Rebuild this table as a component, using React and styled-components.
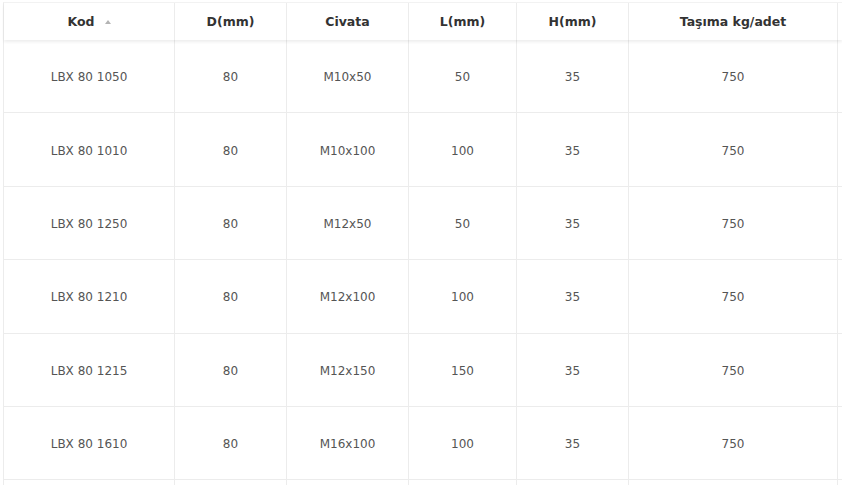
import React from "react";
import styled, { createGlobalStyle } from "styled-components";

const GlobalStyle = createGlobalStyle`
  html, body {
    margin: 0;
    padding: 0;
    background: #fff;
    overflow: hidden;
  }
  body {
    font-family: "DejaVu Sans", Verdana, sans-serif;
  }
`;

const columns = "171px 112px 122px 108px 112px 209px 4px";

const Wrapper = styled.div`
  padding: 2px 0 0 3px;
  width: 839px;
  height: 483px;
  overflow: hidden;
`;

const Table = styled.div`
  border-left: 1px solid #ececec;
  border-top: 1px solid #f2f2f2;
`;

const HeadRow = styled.div`
  display: grid;
  grid-template-columns: ${columns};
  height: 37px;
  box-shadow: 0 2px 3px rgba(0, 0, 0, 0.07);
  position: relative;
  z-index: 1;
`;

const HeadCell = styled.div`
  display: flex;
  align-items: center;
  justify-content: center;
  gap: 10px;
  border-right: ${(p) => (p.$last ? "none" : "1px solid #ececec")};
  font-weight: bold;
  font-size: 12.5px;
  color: #333;
  padding-bottom: 1px;
`;

const SortArrow = styled.span`
  width: 0;
  height: 0;
  border-left: 3.5px solid transparent;
  border-right: 3.5px solid transparent;
  border-bottom: 4px solid #b4b4b4;
  margin-top: 1px;
`;

const Row = styled.div`
  display: grid;
  grid-template-columns: ${columns};
  height: 73.4px;
  box-sizing: border-box;
  border-bottom: 1px solid #ececec;
`;

const Cell = styled.div`
  display: flex;
  align-items: center;
  justify-content: center;
  border-right: ${(p) => (p.$last ? "none" : "1px solid #ececec")};
  font-size: 12px;
  color: #555;
  padding-top: 2px;
`;

const headers = ["Kod", "D(mm)", "Civata", "L(mm)", "H(mm)", "Taşıma kg/adet", ""];

const rows = [
  ["LBX 80 1050", "80", "M10x50", "50", "35", "750"],
  ["LBX 80 1010", "80", "M10x100", "100", "35", "750"],
  ["LBX 80 1250", "80", "M12x50", "50", "35", "750"],
  ["LBX 80 1210", "80", "M12x100", "100", "35", "750"],
  ["LBX 80 1215", "80", "M12x150", "150", "35", "750"],
  ["LBX 80 1610", "80", "M16x100", "100", "35", "750"],
  ["", "", "", "", "", ""],
];

const App = () => {
  return (
    <Wrapper>
      <GlobalStyle />
      <Table>
        <HeadRow>
          {headers.map((h, i) => (
            <HeadCell key={i} $last={i === headers.length - 1}>
              {h}
              {i === 0 && <SortArrow />}
            </HeadCell>
          ))}
        </HeadRow>
        {rows.map((r, i) => (
          <Row key={i}>
            {r.map((c, j) => (
              <Cell key={j}>{c}</Cell>
            ))}
            <Cell $last />
          </Row>
        ))}
      </Table>
    </Wrapper>
  );
};

export default App;
